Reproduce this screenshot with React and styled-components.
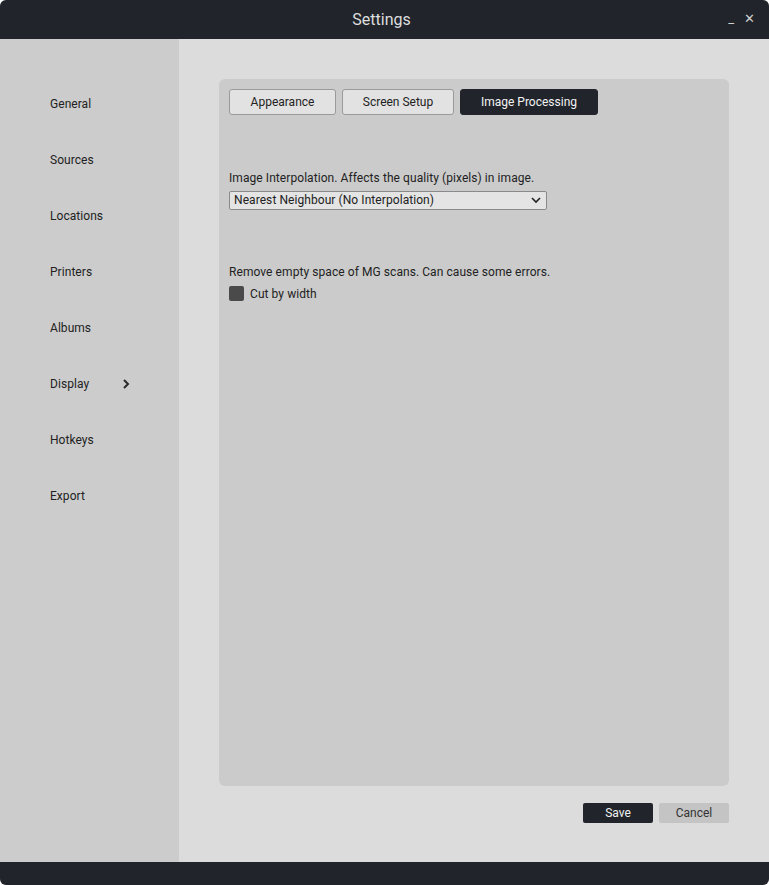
import React, { useState } from "react";
import styled, { createGlobalStyle } from "styled-components";

const GlobalStyle = createGlobalStyle`
  html, body {
    margin: 0;
    padding: 0;
    background: #ffffff;
  }
  body {
    font-family: Roboto, "Liberation Sans", sans-serif;
  }
`;

const Window = styled.div`
  width: 769px;
  height: 885px;
  display: flex;
  flex-direction: column;
  background: #dcdcdc;
  border-radius: 6px;
  overflow: hidden;
`;

const TitleBar = styled.div`
  height: 39px;
  flex: none;
  background: #21252b;
  display: flex;
  align-items: center;
  justify-content: center;
  padding-right: 6px;
  box-sizing: border-box;
  position: relative;
  color: #dedede;
  font-size: 16px;
`;

const WindowControls = styled.div`
  position: absolute;
  right: 14px;
  top: 12px;
  display: flex;
  gap: 10px;
  align-items: center;
`;

const ControlBtn = styled.span`
  color: #d0d0d0;
  font-size: 13px;
  line-height: 14px;
  cursor: pointer;
`;

const Body = styled.div`
  flex: 1;
  display: flex;
  min-height: 0;
`;

const Sidebar = styled.nav`
  width: 179px;
  flex: none;
  background: #cccccc;
  padding-top: 37px;
  box-sizing: border-box;
`;

const NavItem = styled.div`
  height: 56px;
  display: flex;
  align-items: center;
  padding-left: 50px;
  font-size: 12px;
  letter-spacing: 0.05px;
  color: #222;
  cursor: pointer;
`;

const NavLabel = styled.span`
  width: 71px;
`;

const Main = styled.main`
  flex: 1;
  padding: 40px 40px 0 40px;
  display: flex;
  flex-direction: column;
`;

const Panel = styled.section`
  height: 707px;
  background: #cbcbcb;
  border-radius: 6px;
  padding: 10px;
  box-sizing: border-box;
`;

const Tabs = styled.div`
  display: flex;
  gap: 6px;
`;

const Tab = styled.button`
  width: ${(p) => p.$w}px;
  height: 26px;
  box-sizing: border-box;
  border: 1px solid ${(p) => (p.$active ? "#21252b" : "#9a9a9a")};
  border-radius: 3px;
  background: ${(p) => (p.$active ? "#21252b" : "#e2e2e2")};
  color: ${(p) => (p.$active ? "#f2f2f2" : "#222")};
  font-family: Roboto, "Liberation Sans", sans-serif;
  font-size: 12px;
  padding: 0;
  cursor: pointer;
`;

const Field = styled.div`
  margin-top: ${(p) => p.$top}px;
  display: flex;
  flex-direction: column;
  gap: 6px;
`;

const Label = styled.div`
  font-size: 12px;
  letter-spacing: 0.07px;
  color: #222;
  line-height: 14px;
`;

const Select = styled.div`
  width: 318px;
  height: 19px;
  box-sizing: border-box;
  border: 1px solid #8a8a8a;
  border-radius: 2px;
  background: #e4e4e4;
  display: flex;
  align-items: center;
  justify-content: space-between;
  padding: 0 4px 1px 4px;
  font-size: 12px;
  letter-spacing: 0.07px;
  color: #222;
`;

const CheckRow = styled.label`
  display: flex;
  align-items: center;
  gap: 6px;
  margin-top: 1px;
  font-size: 12px;
  letter-spacing: 0.07px;
  color: #222;
  cursor: pointer;
`;

const Box = styled.span`
  width: 15px;
  height: 15px;
  border-radius: 2px;
  background: #4a4a4a;
`;

const Footer = styled.div`
  display: flex;
  justify-content: flex-end;
  gap: 6px;
  margin-top: 17px;
`;

const FootBtn = styled.button`
  width: 70px;
  height: 20px;
  border: none;
  border-radius: 2px;
  background: ${(p) => (p.$primary ? "#21252b" : "#c4c4c4")};
  color: ${(p) => (p.$primary ? "#f2f2f2" : "#333")};
  font-family: Roboto, "Liberation Sans", sans-serif;
  font-size: 12px;
  padding: 0;
  cursor: pointer;
`;

const BottomBar = styled.div`
  height: 23px;
  flex: none;
  background: #21252b;
`;

const Chevron = () => (
  <svg width="10" height="12" viewBox="0 0 10 12">
    <path d="M3 2l4 4-4 4" fill="none" stroke="#2a2a2a" strokeWidth="2" />
  </svg>
);

const Caret = () => (
  <svg width="12" height="8" viewBox="0 0 12 8">
    <path d="M2 2l4 4 4-4" fill="none" stroke="#222" strokeWidth="1.6" />
  </svg>
);

export default function App() {
  const [tab, setTab] = useState("Image Processing");
  const nav = ["General", "Sources", "Locations", "Printers", "Albums", "Display", "Hotkeys", "Export"];
  const tabs = [
    { name: "Appearance", w: 107 },
    { name: "Screen Setup", w: 112 },
    { name: "Image Processing", w: 138 },
  ];

  return (
    <Window>
      <GlobalStyle />
      <TitleBar>
        Settings
        <WindowControls>
          <ControlBtn>_</ControlBtn>
          <ControlBtn>✕</ControlBtn>
        </WindowControls>
      </TitleBar>
      <Body>
        <Sidebar>
          {nav.map((n) => (
            <NavItem key={n}>
              <NavLabel>{n}</NavLabel>
              {n === "Display" && <Chevron />}
            </NavItem>
          ))}
        </Sidebar>
        <Main>
          <Panel>
            <Tabs>
              {tabs.map((t) => (
                <Tab key={t.name} $w={t.w} $active={tab === t.name} onClick={() => setTab(t.name)}>
                  {t.name}
                </Tab>
              ))}
            </Tabs>
            <Field $top={56}>
              <Label>Image Interpolation. Affects the quality (pixels) in image.</Label>
              <Select>
                Nearest Neighbour (No Interpolation)
                <Caret />
              </Select>
            </Field>
            <Field $top={55}>
              <Label>Remove empty space of MG scans. Can cause some errors.</Label>
              <CheckRow>
                <Box />
                Cut by width
              </CheckRow>
            </Field>
          </Panel>
          <Footer>
            <FootBtn $primary>Save</FootBtn>
            <FootBtn>Cancel</FootBtn>
          </Footer>
        </Main>
      </Body>
      <BottomBar />
    </Window>
  );
}
